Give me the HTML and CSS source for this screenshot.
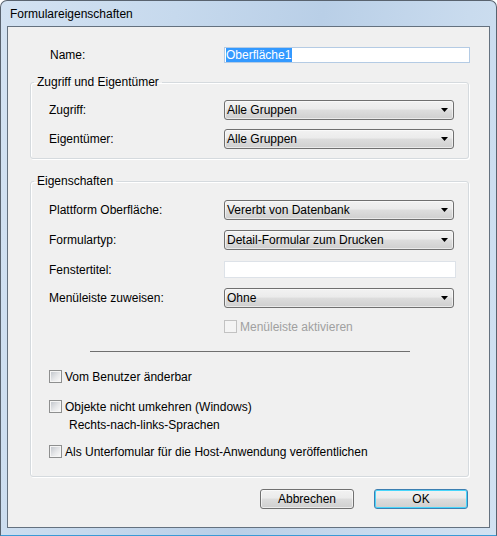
FILE: index.html
```html
<!DOCTYPE html>
<html lang="de">
<head>
<meta charset="utf-8">
<title>Formulareigenschaften</title>
<link rel="stylesheet" href="styles.css">
</head>
<body>
<div class="window">
  <div class="titlebar">Formulareigenschaften</div>
  <div class="client">
    <div class="row name-row">
      <span class="lbl">Name:</span>
      <div class="textbox focused"><span class="sel">Oberfläche1</span></div>
    </div>

    <fieldset class="group g1">
      <legend>Zugriff und Eigentümer</legend>
      <div class="row">
        <span class="lbl">Zugriff:</span>
        <div class="combo">Alle Gruppen</div>
      </div>
      <div class="row r-gap9">
        <span class="lbl">Eigentümer:</span>
        <div class="combo">Alle Gruppen</div>
      </div>
    </fieldset>

    <fieldset class="group g2">
      <legend>Eigenschaften</legend>
      <div class="row">
        <span class="lbl">Plattform Oberfläche:</span>
        <div class="combo">Vererbt von Datenbank</div>
      </div>
      <div class="row r-gap10">
        <span class="lbl">Formulartyp:</span>
        <div class="combo">Detail-Formular zum Drucken</div>
      </div>
      <div class="row r-gap11">
        <span class="lbl">Fenstertitel:</span>
        <div class="textbox wide"></div>
      </div>
      <div class="row r-gap10">
        <span class="lbl">Menüleiste zuweisen:</span>
        <div class="combo">Ohne</div>
      </div>
      <div class="row r-gap12">
        <span></span>
        <label class="check disabled"><span class="cb"></span>Menüleiste aktivieren</label>
      </div>
      <div class="separator"></div>
      <label class="check opt first"><span class="cb"></span>Vom Benutzer änderbar</label>
      <label class="check opt second"><span class="cb"></span>Objekte nicht umkehren (Windows)</label>
      <div class="subnote">Rechts-nach-links-Sprachen</div>
      <label class="check opt third"><span class="cb"></span>Als Unterfomular für die Host-Anwendung veröffentlichen</label>
    </fieldset>

    <div class="buttons">
      <button class="btn">Abbrechen</button>
      <button class="btn default">OK</button>
    </div>
  </div>
</div>
</body>
</html>
```

FILE: styles.css
```css
* { box-sizing: border-box; }

html, body {
  margin: 0;
  padding: 0;
  width: 497px;
  height: 536px;
  overflow: hidden;
  background: #ffffff;
  font-family: "Liberation Sans", Arial, sans-serif;
  font-size: 12px;
  color: #000;
}

.window {
  width: 497px;
  height: 536px;
  border: 1px solid #59636f;
  border-bottom-color: #3a9ad6;
  border-radius: 7px 7px 0 0;
  background: linear-gradient(100deg, #d3e2f2 0%, #c6d9ed 30%, #b9cfe7 55%, #c9dbee 80%, #d2e2f2 100%);
}

.titlebar {
  height: 25px;
  padding: 6px 0 0 9px;
  line-height: 14px;
  color: #000;
}

.client {
  margin: 0 6px 7px 6px;
  height: 502px;
  border: 1px solid #64717f;
  background: #f0f0f0;
  padding: 0 20px 0 22px;
}

.row {
  display: grid;
  grid-template-columns: 175px 230px;
  align-items: center;
}

.name-row {
  margin-top: 20px;
  height: 16px;
  grid-template-columns: 174px 246px;
  padding-left: 20px;
}

.lbl { line-height: 14px; white-space: nowrap; }

.textbox {
  height: 16px;
  border: 1px solid #dde2e8;
  background: #fff;
  display: flex;
  align-items: center;
}
.textbox.focused { border-color: #b4cbe4; }
.textbox.wide { width: 232px; height: 17px; }

.sel {
  background: #3399ff;
  color: #fff;
  line-height: 14px;
  margin-left: 1px;
  padding: 0 1px 0 0;
}

.group {
  margin: 0;
  padding: 0 0 0 18px;
  min-width: 0;
  border: 1px solid #d5dade;
  border-radius: 3px;
  box-shadow: inset 1px 1px 0 #ffffff, 1px 1px 0 #ffffff;
}

.group legend {
  margin-left: -15px;
  padding: 0 3px;
  line-height: 14px;
}

.g1 {
  margin-top: 12px;
  padding-top: 11px;
  padding-bottom: 9px;
}

.g2 {
  margin-top: 15px;
  padding-top: 12px;
  padding-bottom: 18px;
}

.row .combo, .row .textbox { grid-column: 2; }

.r-gap9 { margin-top: 9px; }
.r-gap10 { margin-top: 10px; }
.r-gap11 { margin-top: 11px; }
.r-gap12 { margin-top: 12px; }

.combo {
  height: 20px;
  border: 1px solid #707070;
  border-radius: 3px;
  background: linear-gradient(#f2f2f2 0%, #ebebeb 45%, #dddddd 50%, #cfcfcf 100%);
  box-shadow: inset 0 0 0 1px rgba(255, 255, 255, 0.55);
  display: flex;
  align-items: center;
  justify-content: space-between;
  padding: 0 5px 0 2px;
  line-height: 14px;
  white-space: nowrap;
}

.combo::after {
  content: "";
  width: 7px;
  height: 4px;
  background: #000;
  clip-path: polygon(0 0, 100% 0, 50% 100%);
}

.check {
  display: flex;
  align-items: center;
  gap: 3px;
  height: 13px;
  line-height: 14px;
  white-space: nowrap;
}

.cb {
  width: 13px;
  height: 13px;
  flex: none;
  border: 1px solid #8e8f8f;
  padding: 1px;
  background: linear-gradient(135deg, #c4c8ce 0%, #e6e7e9 55%, #f8f8f8 100%) content-box, #f5f5f5;
}

.check.disabled { color: #a0a0a0; }
.check.disabled .cb {
  border-color: #c2c2c2;
  background: #f4f4f4;
}

.separator {
  margin: 18px 0 0 41px;
  width: 320px;
  height: 1px;
  background: #6f6f6f;
}

.opt { margin-left: 0; }
.opt.first { margin-top: 18px; }
.opt.second { margin-top: 17px; }
.opt.third { margin-top: 13px; }

.subnote {
  margin: 5px 0 0 20px;
  line-height: 14px;
}

.buttons {
  display: flex;
  justify-content: flex-end;
  gap: 20px;
  margin: 12px 1px 0 0;
}

.btn {
  width: 94px;
  height: 20px;
  padding: 0;
  font: inherit;
  color: #000;
  border: 1px solid #707070;
  border-radius: 3px;
  background: linear-gradient(#f2f2f2 0%, #ebebeb 45%, #dddddd 50%, #cfcfcf 100%);
  box-shadow: inset 0 0 0 1px rgba(255, 255, 255, 0.6);
  line-height: 14px;
}

.btn.default {
  border-color: #3c7fb1;
  box-shadow: inset 0 0 0 1px #48d6fb;
}
```
